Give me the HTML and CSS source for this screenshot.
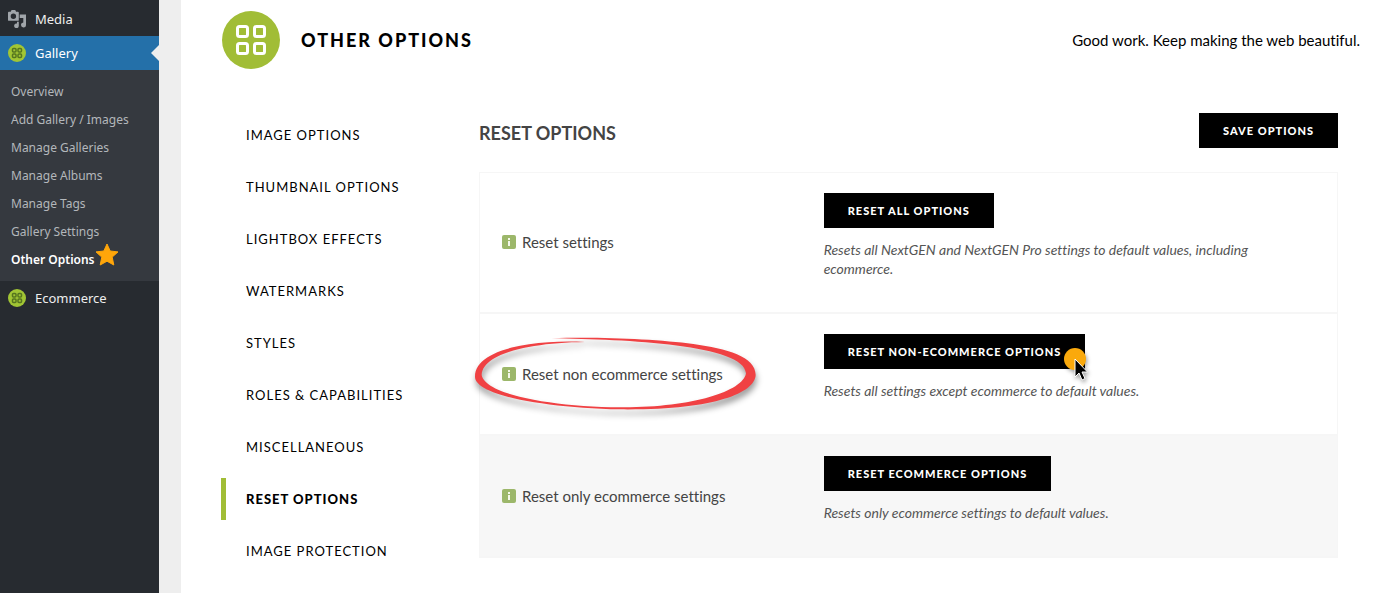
FILE: index.html
```html
<!DOCTYPE html>
<html lang="en">
<head>
  <meta charset="UTF-8" />
  <meta name="viewport" content="width=device-width, initial-scale=1" />
  <title>Other Options</title>
  <link rel="stylesheet" href="styles.css">
</head>
<body>
  <!-- shared icons -->
  <svg class="sprite" aria-hidden="true">
    <symbol id="icon-gallery" viewBox="0 0 58 58">
      <circle cx="29" cy="29" r="29" fill="#a1bd36" />
      <g fill="none" stroke="currentColor" stroke-width="3">
        <rect x="15.500" y="15.500" width="10" height="10" rx="2" />
        <rect x="32.500" y="15.500" width="10" height="10" rx="2" />
        <rect x="15.500" y="32.500" width="10" height="10" rx="2" />
        <rect x="32.500" y="32.500" width="10" height="10" rx="2" />
      </g>
    </symbol>
    <symbol id="icon-gallery-small" viewBox="0 0 18 18">
      <circle cx="9" cy="9" r="9" fill="#a1c534" />
      <g fill="#a1c534" stroke="#55751f" stroke-width="1.500">
        <rect x="4.500" y="4.500" width="3.500" height="3.500" rx="1" />
        <rect x="10" y="4.500" width="3.500" height="3.500" rx="1" />
        <rect x="4.500" y="10" width="3.500" height="3.500" rx="1" />
        <rect x="10" y="10" width="3.500" height="3.500" rx="1" />
      </g>
    </symbol>
    <symbol id="icon-info" viewBox="0 0 14 14">
      <rect width="14" height="14" rx="2" fill="#9cb76a" />
      <path d="M6 3h2v2H6zM6 6h2v5H6z" fill="#f4f8ea" />
    </symbol>
  </svg>

  <aside class="sidebar">
    <nav aria-label="Admin menu">
      <a class="menu-item" href="#">
        <svg class="menu-icon" viewBox="0 0 20 20" aria-hidden="true">
          <path fill="#a0a5aa" fill-rule="evenodd" d="M0 3q0-1 1-1h2l1-2h4l1 2h2q1 0 1 1v8q0 1-1 1H1q-1 0-1-1zM6 4a3 3 0 1 0 0 6a3 3 0 1 0 0-6z" />
          <path fill="#a0a5aa" d="M13 5h7v11.500a2.800 2.800 0 1 1-3-2.700V9h-4zM10 13h2v4.500a2.600 2.600 0 1 1-2-2.500z" />
        </svg>
        Media
      </a>
      <a class="menu-item current" href="#">
        <svg class="menu-icon" aria-hidden="true"><use href="#icon-gallery-small" /></svg>
        Gallery
      </a>
      <ul class="submenu">
        <li><a href="#">Overview</a></li>
        <li><a href="#">Add Gallery / Images</a></li>
        <li><a href="#">Manage Galleries</a></li>
        <li><a href="#">Manage Albums</a></li>
        <li><a href="#">Manage Tags</a></li>
        <li><a href="#">Gallery Settings</a></li>
        <li>
          <a class="active" href="#">Other Options
            <svg class="star" viewBox="0 0 24 24" aria-hidden="true">
              <path fill="#ffa60a" stroke="#ffa60a" stroke-linejoin="round" d="M12 1l3.200 7 7.800.9-5.800 5.200 1.600 7.900L12 18.200 5.200 22l1.600-7.900L1 8.900 8.800 8z" />
            </svg>
          </a>
        </li>
      </ul>
      <a class="menu-item" href="#">
        <svg class="menu-icon" aria-hidden="true"><use href="#icon-gallery-small" /></svg>
        Ecommerce
      </a>
    </nav>
  </aside>

  <main class="page">
    <header class="page-header">
      <svg class="logo" aria-hidden="true"><use href="#icon-gallery" /></svg>
      <h1>Other Options</h1>
      <p>Good work. Keep making the web beautiful.</p>
    </header>

    <div class="page-body">
      <nav class="tabs" aria-label="Option sections">
        <a href="#">Image Options</a>
        <a href="#">Thumbnail Options</a>
        <a href="#">Lightbox Effects</a>
        <a href="#">Watermarks</a>
        <a href="#">Styles</a>
        <a href="#">Roles &amp; Capabilities</a>
        <a href="#">Miscellaneous</a>
        <a class="active" href="#">Reset Options</a>
        <a href="#">Image Protection</a>
      </nav>

      <section class="options">
        <div class="options-header">
          <h2>Reset Options</h2>
          <button class="btn" type="button">Save Options</button>
        </div>

        <table>
          <tbody>
            <tr>
              <th scope="row">
                <span class="label"><svg class="info" aria-hidden="true"><use href="#icon-info" /></svg>Reset settings</span>
              </th>
              <td>
                <button class="btn" type="button">Reset All Options</button>
                <p>Resets all NextGEN and NextGEN Pro settings to default values, including ecommerce.</p>
              </td>
            </tr>
            <tr>
              <th scope="row">
                <span class="label">
                  <svg class="info" aria-hidden="true"><use href="#icon-info" /></svg>Reset non ecommerce settings
                  <svg class="circled" viewBox="0 0 930 330" aria-hidden="true">
                    <path fill="#f04143" d="M275 55C420 50 590 58 700 72C800 86 887 110 887 165C884 220 760 271 480 268C250 263 45 225 45 170C45 90 210 58 375 66C210 68 68 100 65 165C75 225 280 260 480 262C690 264 850 215 858 160C855 75 500 58 275 55Z" />
                  </svg>
                </span>
              </th>
              <td>
                <button class="btn" type="button">Reset Non-Ecommerce Options
                  <svg class="pointer" viewBox="0 0 24 34" aria-hidden="true">
                    <circle cx="12" cy="11" r="11" fill="#faa90c" />
                    <path fill="#000" stroke="#fff" d="M12 11v18l4-4 3 7 3-1.500-3-6.500h5.500z" />
                  </svg>
                </button>
                <p>Resets all settings except ecommerce to default values.</p>
              </td>
            </tr>
            <tr class="shaded">
              <th scope="row">
                <span class="label"><svg class="info" aria-hidden="true"><use href="#icon-info" /></svg>Reset only ecommerce settings</span>
              </th>
              <td>
                <button class="btn" type="button">Reset Ecommerce Options</button>
                <p>Resets only ecommerce settings to default values.</p>
              </td>
            </tr>
          </tbody>
        </table>
      </section>
    </div>
  </main>
</body>
</html>
```
FILE: styles.css
```css
* {
  box-sizing: border-box;
}

body {
  display: flex;
  min-height: 100vh;
  margin: 0;
  background: #eeeeee;
  color: #000;
  font-family: Lato, sans-serif;
  font-variant-ligatures: none;
}

a {
  color: inherit;
  text-decoration: none;
}

h1, h2, p {
  margin: 0;
}

.sprite {
  position: absolute;
  width: 0;
  height: 0;
}

/* Admin menu */
.sidebar {
  flex: 0 0 159px;
  padding-top: 2px;
  background: #272b30;
  color: #eee;
  font-family: "Noto Sans", "Open Sans", sans-serif;
}

.menu-item {
  position: relative;
  display: flex;
  align-items: center;
  gap: 9px;
  height: 34px;
  padding-left: 8px;
  font-size: 13px;
}

.menu-icon {
  width: 18px;
  height: 18px;
}

.menu-item.current {
  background: #2470a9;
  color: #fff;
}

.menu-item.current::after {
  content: "";
  position: absolute;
  top: 9px;
  right: 0;
  border: 8px solid transparent;
  border-left: 0;
  border-right-color: #eeeeee;
}

.submenu {
  margin: 0;
  padding: 8px 0 7px;
  background: #35393f;
  color: #b3b7bb;
  font-size: 12px;
  line-height: 28px;
  list-style: none;
}

.submenu a {
  position: relative;
  display: inline-block;
  margin-left: 11px;
  white-space: nowrap;
}

.submenu li {
  height: 28px;
}

.submenu .active {
  color: #fff;
  font-weight: 600;
}

.star {
  position: absolute;
  top: -3px;
  left: 100%;
  width: 24px;
  height: 24px;
}

/* Page */
.page {
  flex: 1;
  min-width: 0;
  margin-left: 22px;
  padding: 11px 30px 36px 40px;
  background: #fff;
}

.page-header {
  display: flex;
  align-items: center;
}

.logo {
  width: 58px;
  height: 58px;
  margin: 0 21px 0 1px;
  color: #fff;
}

.page-header h1 {
  flex: 1;
  font-size: 18px;
  font-weight: 900;
  letter-spacing: 2px;
  text-transform: uppercase;
}

.page-header p {
  font-size: 15px;
}

.page-body {
  display: flex;
  padding: 44px 22px 0 0;
}

/* Tabs */
.tabs {
  display: flex;
  flex: 0 0 258px;
  flex-direction: column;
  gap: 10px;
  padding-top: 1px;
}

.tabs a {
  padding-left: 20px;
  border-left: 5px solid transparent;
  font-size: 13px;
  letter-spacing: 1px;
  line-height: 42px;
  text-transform: uppercase;
}

.tabs .active {
  border-left-color: #a1bd36;
  font-weight: 900;
}

/* Options */
.options {
  flex: 1;
  min-width: 0;
}

.options-header {
  display: flex;
  align-items: flex-end;
  justify-content: space-between;
  margin-bottom: 24px;
}

.options-header h2 {
  color: #444;
  font-size: 18px;
  font-weight: 700;
  line-height: 30px;
  text-transform: uppercase;
}

.btn {
  position: relative;
  display: block;
  height: 35px;
  padding: 0 24px;
  border: 0;
  background: #000;
  color: #fff;
  font-family: inherit;
  font-size: 11px;
  font-weight: 900;
  letter-spacing: 1px;
  text-transform: uppercase;
  cursor: pointer;
}

table {
  width: 100%;
  border: 1px solid #f6f6f6;
  border-collapse: collapse;
}

tr {
  border-bottom: 2px solid #f6f6f6;
}

th {
  width: 40%;
  padding: 0 22px;
  color: #444;
  font-size: 15px;
  font-weight: 400;
  text-align: left;
}

td {
  padding: 20px 23px 34px 1px;
}

td p {
  margin-top: 12px;
  color: #555;
  font-size: 14px;
  font-style: italic;
  line-height: 19px;
}

.shaded {
  background: #f7f7f7;
}

.label {
  position: relative;
  display: inline-flex;
  align-items: center;
  gap: 6px;
  white-space: nowrap;
}

.info {
  width: 14px;
  height: 14px;
}

/* Hand-drawn ring and click marker */
.circled {
  position: absolute;
  top: -45px;
  left: -42px;
  width: 310px;
  height: 110px;
  filter: drop-shadow(1px 5px 3px rgb(0 0 0 / 0.4));
  pointer-events: none;
}

.pointer {
  position: absolute;
  top: 14px;
  right: -2px;
  width: 24px;
  height: 34px;
  overflow: visible;
  filter: drop-shadow(1px 2px 2px rgb(0 0 0 / 0.4));
}
```
